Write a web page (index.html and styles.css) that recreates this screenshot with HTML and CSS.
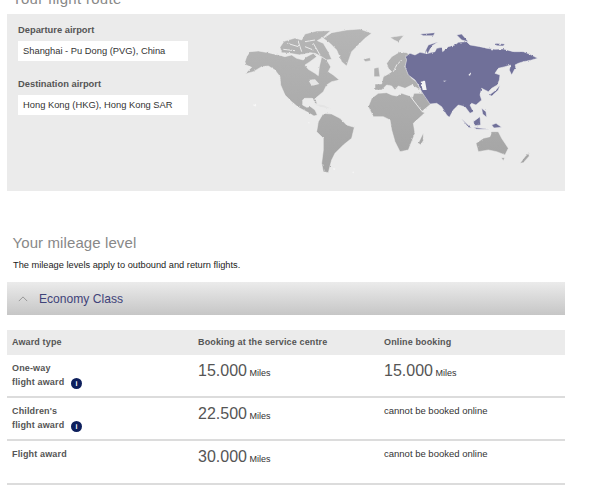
FILE: index.html
```html
<!DOCTYPE html>
<html lang="en">
<head>
<meta charset="utf-8">
<title>Your flight route</title>
<link rel="stylesheet" href="styles.css">
</head>
<body>
<main class="page">
  <h2 class="route-title">Your flight route</h2>
  <section class="route-panel">
    <div class="route-form">
      <div class="field">
        <div class="field-label">Departure airport</div>
        <div class="field-value">Shanghai - Pu Dong (PVG), China</div>
      </div>
      <div class="field">
        <div class="field-label">Destination airport</div>
        <div class="field-value">Hong Kong (HKG), Hong Kong SAR</div>
      </div>
    </div>
    <svg class="map" viewBox="188 14 377 177" aria-hidden="true">
      <defs>
        <linearGradient id="land" gradientUnits="userSpaceOnUse" x1="0" y1="40" x2="0" y2="500">
          <stop offset="0" stop-color="#b6b6b6"/>
          <stop offset="1" stop-color="#a3a3a3"/>
        </linearGradient>
        <filter id="rough" x="-5%" y="-5%" width="110%" height="110%">
          <feTurbulence type="fractalNoise" baseFrequency=".35" numOctaves="2" seed="4"/>
          <feDisplacementMap in="SourceGraphic" scale="2.2" xChannelSelector="R" yChannelSelector="G"/>
        </filter>
      </defs>
      <g filter="url(#rough)">
      <g transform="translate(200 10) scale(.3333)" fill="url(#land)" stroke="#f1f1f1" stroke-width="1.5" stroke-linejoin="round">
        <path d="M135,155 L140,140 L150,125 L175,123 L205,128 L235,135 L255,140 L275,135 L290,145 L310,150 L320,140 L340,130 L350,140 L330,155 L315,165 L325,178 L345,190 L355,197 L358,170 L365,140 L380,150 L392,170 L385,185 L400,195 L418,210 L395,215 L380,225 L370,245 L350,262 L345,265 L352,282 L345,280 L338,265 L315,265 L308,270 L308,285 L320,292 L332,290 L345,300 L352,315 L342,318 L320,305 L295,292 L275,275 L255,255 L242,225 L240,200 L225,180 L205,168 L185,170 L160,185 L135,192 L155,172 L138,165 Z"/>
        <path d="M240,112 L252,94 L285,84 L305,90 L315,72 L350,63 L392,62 L372,80 L352,92 L370,100 L385,125 L395,148 L380,150 L365,140 L345,130 L330,128 L300,135 L270,130 L245,128 Z"/>
        <path d="M262,100 L295,110 M295,95 L305,125 M315,95 L345,90 M315,110 L340,120 M340,100 L360,135 M250,118 L285,122" fill="none" stroke="#ebebeb" stroke-width="3"/>
        <path d="M370,85 L395,68 L440,60 L480,57 L515,70 L495,85 L480,100 L455,125 L440,168 L425,155 L410,120 L390,100 Z"/>
        <path d="M490,147 L510,143 L512,152 L495,155 Z"/>
        <path d="M355,335 L370,310 L395,312 L420,325 L440,345 L463,352 L455,385 L430,405 L405,430 L395,450 L385,488 L370,485 L365,460 L370,420 L370,385 L350,365 Z"/>
        <path d="M340,283 L370,285 L395,297 L370,292 Z" fill="#e4e4e4" stroke="none"/>
        <path d="M325,210 L345,208 L358,222 L335,228 Z" fill="#e6e6e6" stroke="none"/>
        <path d="M160,285 L168,288 M325,338 L328,340 M400,476 L405,478 M458,486 L461,488" fill="none" stroke="#f7f7f7" stroke-width="4"/>
      </g>
      <g transform="translate(390 10) scale(.3333)" stroke="#f1f1f1" stroke-width="1.5" stroke-linejoin="round">
        <g fill="url(#land)">
          <path d="M-65,290 L-55,265 L-35,250 L-10,248 L5,255 L20,258 L35,250 L60,258 L68,262 L72,250 L100,250 L125,280 L95,305 L105,308 L70,340 L75,370 L55,420 L30,425 L15,395 L5,360 L0,330 L-20,320 L-50,320 Z"/>
          <path d="M-45,238 L-45,222 L-25,222 L-20,200 L-5,192 L5,185 L-5,175 L-10,160 L5,140 L30,125 L50,128 L60,135 L45,170 L65,205 L80,215 L92,240 L65,225 L45,235 L25,228 L15,240 L5,228 L-10,225 L-25,240 L-45,240 Z"/>
          <path d="M-48,175 L-34,172 L-30,200 L-48,200 Z"/>
          <path d="M10,185 L20,165 L35,150 M60,258 L95,303" fill="none" stroke="#ebebeb" stroke-width="3"/>
          <path d="M0,82 L42,76 L25,96 L12,90 Z"/>
          <path d="M85,400 L100,368 L100,392 L92,404 Z"/>
          <path d="M258,400 L280,385 L300,380 L305,365 L325,365 L335,385 L355,415 L345,435 L320,425 L295,420 L265,425 Z"/>
          <path d="M390,460 L405,440 L415,430 L418,438 L400,458 Z"/>
          <path d="M334,443 L344,443 L340,452 Z"/>
        </g>
        <g fill="#6f6f99">
          <path d="M45,170 L50,150 L47,140 L60,130 L75,135 L90,127 L105,130 L115,130 L135,125 L140,115 L155,112 L158,125 L175,110 L195,105 L205,97 L230,95 L240,105 L270,110 L290,115 L315,118 L340,117 L370,125 L400,125 L420,133 L443,145 L425,150 L400,155 L385,160 L375,165 L378,170 L365,195 L358,180 L362,165 L345,170 L325,175 L315,190 L330,195 L328,210 L322,225 L305,235 L295,245 L285,240 L275,235 L270,255 L275,270 L258,285 L245,280 L240,285 L250,305 L240,310 L225,290 L205,285 L190,300 L178,322 L170,315 L155,290 L140,280 L120,282 L105,260 L95,245 L85,225 L75,210 L55,195 Z"/>
          <path d="M105,125 L115,105 L145,95 L125,108 L115,128 Z"/>
          <path d="M90,72 L135,68 L130,77 L100,77 Z"/>
          <path d="M200,75 L215,72 L235,95 L215,90 Z"/>
          <path d="M315,100 L345,102 L340,108 L320,107 Z"/>
          <path d="M298,255 L318,240 L330,225 L325,240 L305,258 Z"/>
          <path d="M250,335 L270,320 L272,345 L255,347 Z"/>
          <path d="M213,325 L245,355 L235,352 Z"/>
          <path d="M275,295 L288,305 L290,322 L278,312 Z"/>
          <path d="M305,345 L318,340 L335,352 L312,354 Z"/>
          <path d="M250,352 L300,358 L260,358 Z"/>
        </g>
        <path d="M92,215 L105,212 L110,240 L98,240 Z M160,212 L170,212 L160,216 Z M235,195 L245,185 L240,197 Z" fill="#f4f4f4" stroke="none"/>
      </g>
      </g>
    </svg>
  </section>

  <h2 class="level-title">Your mileage level</h2>
  <p class="level-note">The mileage levels apply to outbound and return flights.</p>

  <div class="accordion">
    <svg class="chevron" viewBox="0 0 12 7" aria-hidden="true"><path d="M1 6 L6 1 L11 6" fill="none" stroke="#8c8c8c" stroke-width="1"/></svg>
    <span class="accordion-title">Economy Class</span>
  </div>

  <section class="awards">
    <div class="row row-head">
      <div>Award type</div>
      <div>Booking at the service centre</div>
      <div>Online booking</div>
    </div>
    <div class="row">
      <div class="award-name">One-way<br>flight award <span class="info">i</span></div>
      <div class="miles"><span class="num">15.000</span> <span class="unit">Miles</span></div>
      <div class="miles"><span class="num">15.000</span> <span class="unit">Miles</span></div>
    </div>
    <div class="row">
      <div class="award-name">Children's<br>flight award <span class="info">i</span></div>
      <div class="miles"><span class="num">22.500</span> <span class="unit">Miles</span></div>
      <div class="no-online">cannot be booked online</div>
    </div>
    <div class="row row-last">
      <div class="award-name">Flight award</div>
      <div class="miles"><span class="num">30.000</span> <span class="unit">Miles</span></div>
      <div class="no-online">cannot be booked online</div>
    </div>
  </section>
</main>
</body>
</html>
```
FILE: styles.css
```css
* { box-sizing: border-box; }
html, body { margin: 0; padding: 0; background: #fff; }
body {
  font-family: "Liberation Sans", Arial, sans-serif;
  color: #333;
  height: 492px;
  overflow: hidden;
}
.page {
  width: 558px;
  margin-left: 7px;
  margin-top: -10px;
}
.route-title, .level-title {
  margin: 0 0 0 5px;
  font-weight: 400;
  font-size: 15px;
  line-height: 18px;
  color: #888;
}
.route-title { height: 24px; letter-spacing: .3px; }
.route-panel {
  display: flex;
  height: 177px;
  background: #ebebeb;
}
.route-form {
  width: 181px;
  flex: none;
  padding: 10px 0 0 11px;
}
.field { margin-bottom: 17px; }
.field-label {
  font-size: 9.35px;
  font-weight: 700;
  line-height: 12px;
  color: #555;
  margin-bottom: 5px;
}
.field-value {
  width: 170px;
  height: 20px;
  padding-left: 5px;
  background: #fff;
  font-size: 9.35px;
  line-height: 20px;
  color: #333;
}
.map { width: 377px; height: 177px; display: block; filter: blur(.35px); }
.level-title {
  margin-top: 43px;
  font-size: 15px;
  letter-spacing: .1px;
  margin-left: 5.5px;
}
.level-note {
  margin: 7px 0 0 6px;
  font-size: 9.25px;
  line-height: 12px;
  color: #222;
}
.accordion {
  display: flex;
  align-items: center;
  gap: 11px;
  height: 33px;
  margin-top: 11px;
  padding-left: 11px;
  background: linear-gradient(#ebebeb, #c6c6c6);
}
.chevron { width: 10px; height: 6px; display: block; }
.accordion-title {
  font-size: 12.1px;
  color: #3f4379;
}
.awards { margin-top: 15px; }
.row {
  display: grid;
  grid-template-columns: 186px 186px 1fr;
  height: 43px;
  padding: 6px 0 0 5px;
  border-bottom: 2px solid #dcdcdc;
  font-size: 9px;
  color: #333;
}
.row-last { height: 44px; }
.row-head {
  height: 25px;
  padding-top: 6px;
  background: #ebebeb;
  border-bottom: 0;
  font-size: 9px;
  font-weight: 700;
  line-height: 12px;
  letter-spacing: .13px;
  color: #555;
}
.award-name {
  font-weight: 700;
  line-height: 14px;
  letter-spacing: .15px;
  color: #555;
}
.info {
  display: inline-block;
  width: 11px;
  height: 11px;
  margin-left: 4px;
  border-radius: 50%;
  background: #0d1f5c;
  color: #fff;
  font-size: 7px;
  line-height: 11px;
  text-align: center;
  vertical-align: -1px;
  letter-spacing: 0;
}
.miles { line-height: 18px; margin-top: 1px; }
.num { font-size: 16px; color: #555; }
.unit { font-size: 9px; }
.no-online { line-height: 12px; font-size: 9.5px; margin-top: 1px; }
```
